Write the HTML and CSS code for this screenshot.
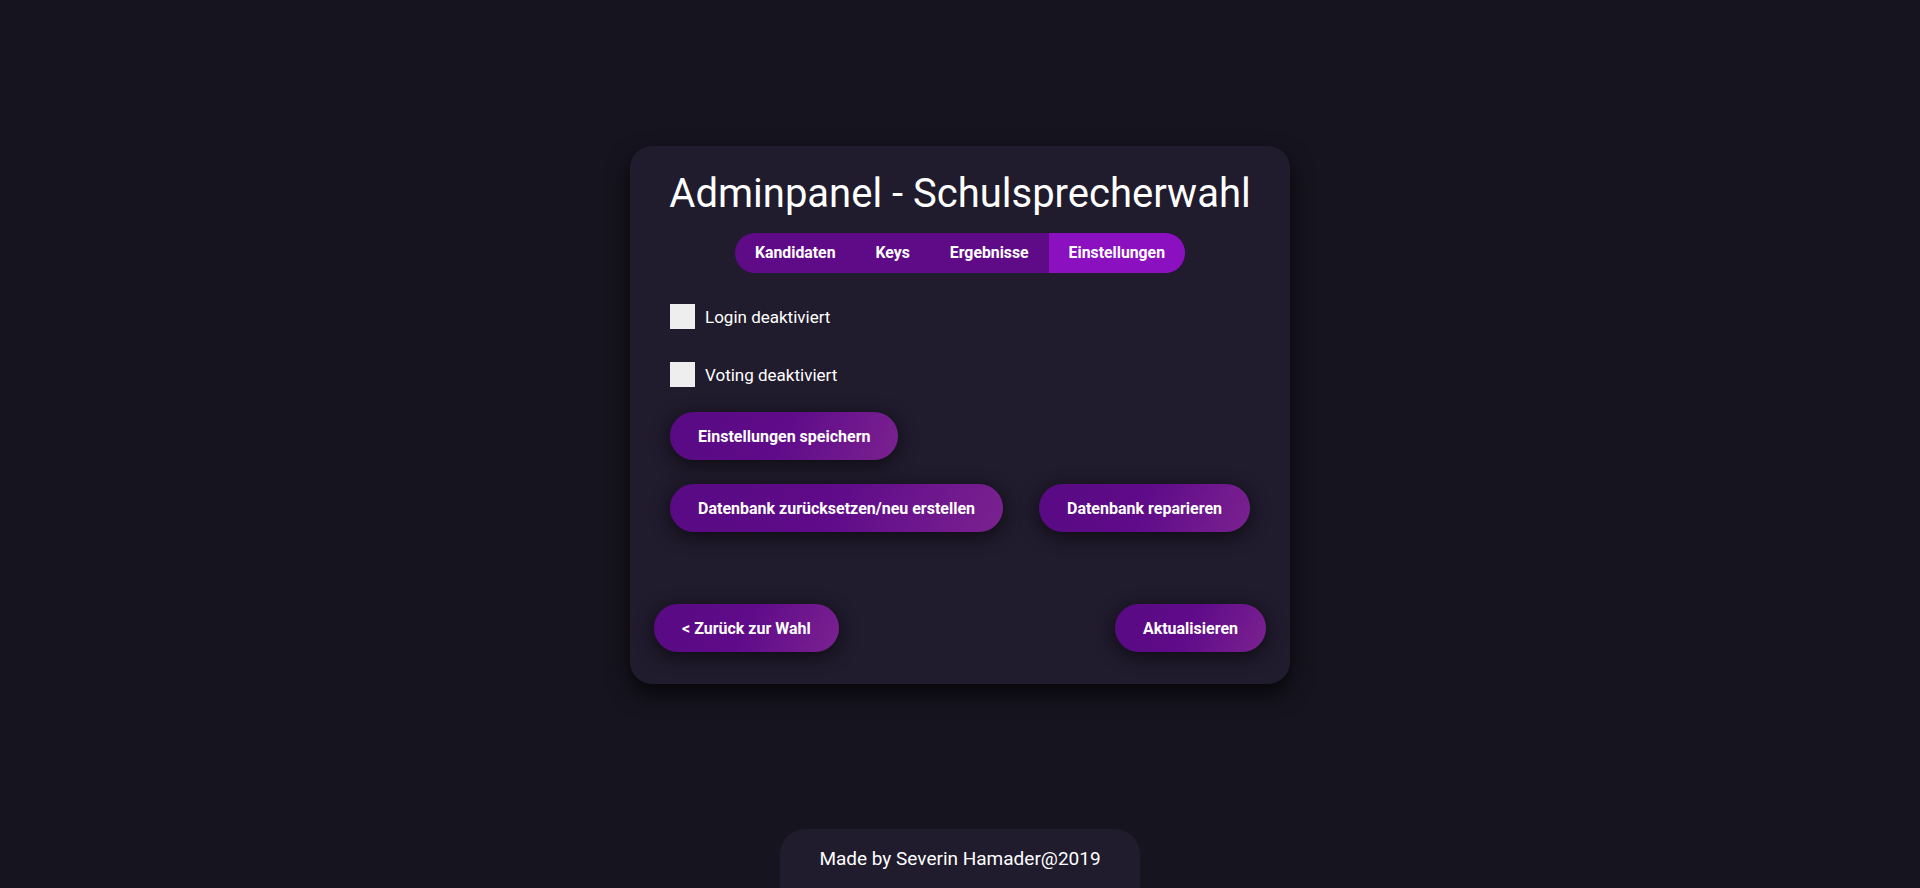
FILE: index.html
```html
<!DOCTYPE html>
<html lang="de">
<head>
<meta charset="utf-8">
<title>Adminpanel - Schulsprecherwahl</title>
<link rel="stylesheet" href="styles.css">
</head>
<body>
<main class="page">
  <section class="card">
    <h1 class="title">Adminpanel - Schulsprecherwahl</h1>
    <nav class="tabs">
      <a class="tab">Kandidaten</a>
      <a class="tab">Keys</a>
      <a class="tab">Ergebnisse</a>
      <a class="tab tab-active">Einstellungen</a>
    </nav>
    <div class="settings">
      <label class="check-row"><input type="checkbox" class="check"><span>Login deaktiviert</span></label>
      <label class="check-row check-row-second"><input type="checkbox" class="check"><span>Voting deaktiviert</span></label>
      <div class="btn-row">
        <button class="btn">Einstellungen speichern</button>
      </div>
      <div class="btn-row btn-row-split">
        <button class="btn">Datenbank zurücksetzen/neu erstellen</button>
        <button class="btn">Datenbank reparieren</button>
      </div>
    </div>
    <div class="card-footer">
      <button class="btn">&lt; Zurück zur Wahl</button>
      <button class="btn">Aktualisieren</button>
    </div>
  </section>
</main>
<footer class="footer">Made by Severin Hamader@2019</footer>
</body>
</html>
```
FILE: styles.css
```css
html, body {
  height: 100%;
}
body {
  margin: 0;
  background: #16141f;
  color: #f4f4f4;
  font-family: Roboto, "Liberation Sans", sans-serif;
  display: flex;
  flex-direction: column;
  align-items: center;
  overflow: hidden;
}
.page {
  display: flex;
  justify-content: center;
  padding-top: 146px;
}
.card {
  width: 660px;
  box-sizing: border-box;
  background: #201b2d;
  border-radius: 22px;
  padding: 24px 0 32px;
  box-shadow: 0 10px 22px rgba(0, 0, 0, 0.7);
  display: flex;
  flex-direction: column;
  align-items: center;
}
.title {
  margin: 0;
  font-size: 40px;
  font-weight: 400;
  line-height: normal;
  color: #ffffff;
}
.tabs {
  margin-top: 16px;
  display: flex;
  height: 40px;
  border-radius: 20px;
  overflow: hidden;
  background: #5f0b87;
}
.tab {
  padding: 0 20px;
  line-height: 40px;
  font-size: 15.8px;
  font-weight: 700;
  color: #ffffff;
}
.tab-active {
  background: #8a10c0;
}
.settings {
  align-self: stretch;
  padding: 31px 40px 0;
  display: flex;
  flex-direction: column;
}
.check-row {
  display: flex;
  align-items: center;
  gap: 10px;
  font-size: 17px;
  color: #ffffff;
}
.check-row-second {
  margin-top: 33px;
}
.check {
  appearance: none;
  -webkit-appearance: none;
  margin: 0;
  width: 25px;
  height: 25px;
  background: #eeeeee;
  border: none;
  border-radius: 0;
}
.btn-row {
  display: flex;
  margin-top: 25px;
}
.btn-row-split {
  margin-top: 24px;
  justify-content: space-between;
}
.btn {
  height: 48px;
  padding: 0 28px;
  border: none;
  border-radius: 24px;
  background: linear-gradient(115deg, #580a83 0%, #600b8a 50%, #7b2290 100%);
  color: #ffffff;
  font-family: Roboto, "Liberation Sans", sans-serif;
  font-size: 16px;
  font-weight: 700;
  box-shadow: 0 4px 18px rgba(0, 0, 0, 0.6);
}
.card-footer {
  align-self: stretch;
  margin-top: 72px;
  padding: 0 24px;
  display: flex;
  justify-content: space-between;
}
.footer {
  margin-top: auto;
  width: 360px;
  box-sizing: border-box;
  height: 59px;
  padding-top: 18px;
  text-align: center;
  background: #201b2d;
  border-radius: 25px 25px 0 0;
  font-size: 19px;
  color: #ffffff;
}
```
